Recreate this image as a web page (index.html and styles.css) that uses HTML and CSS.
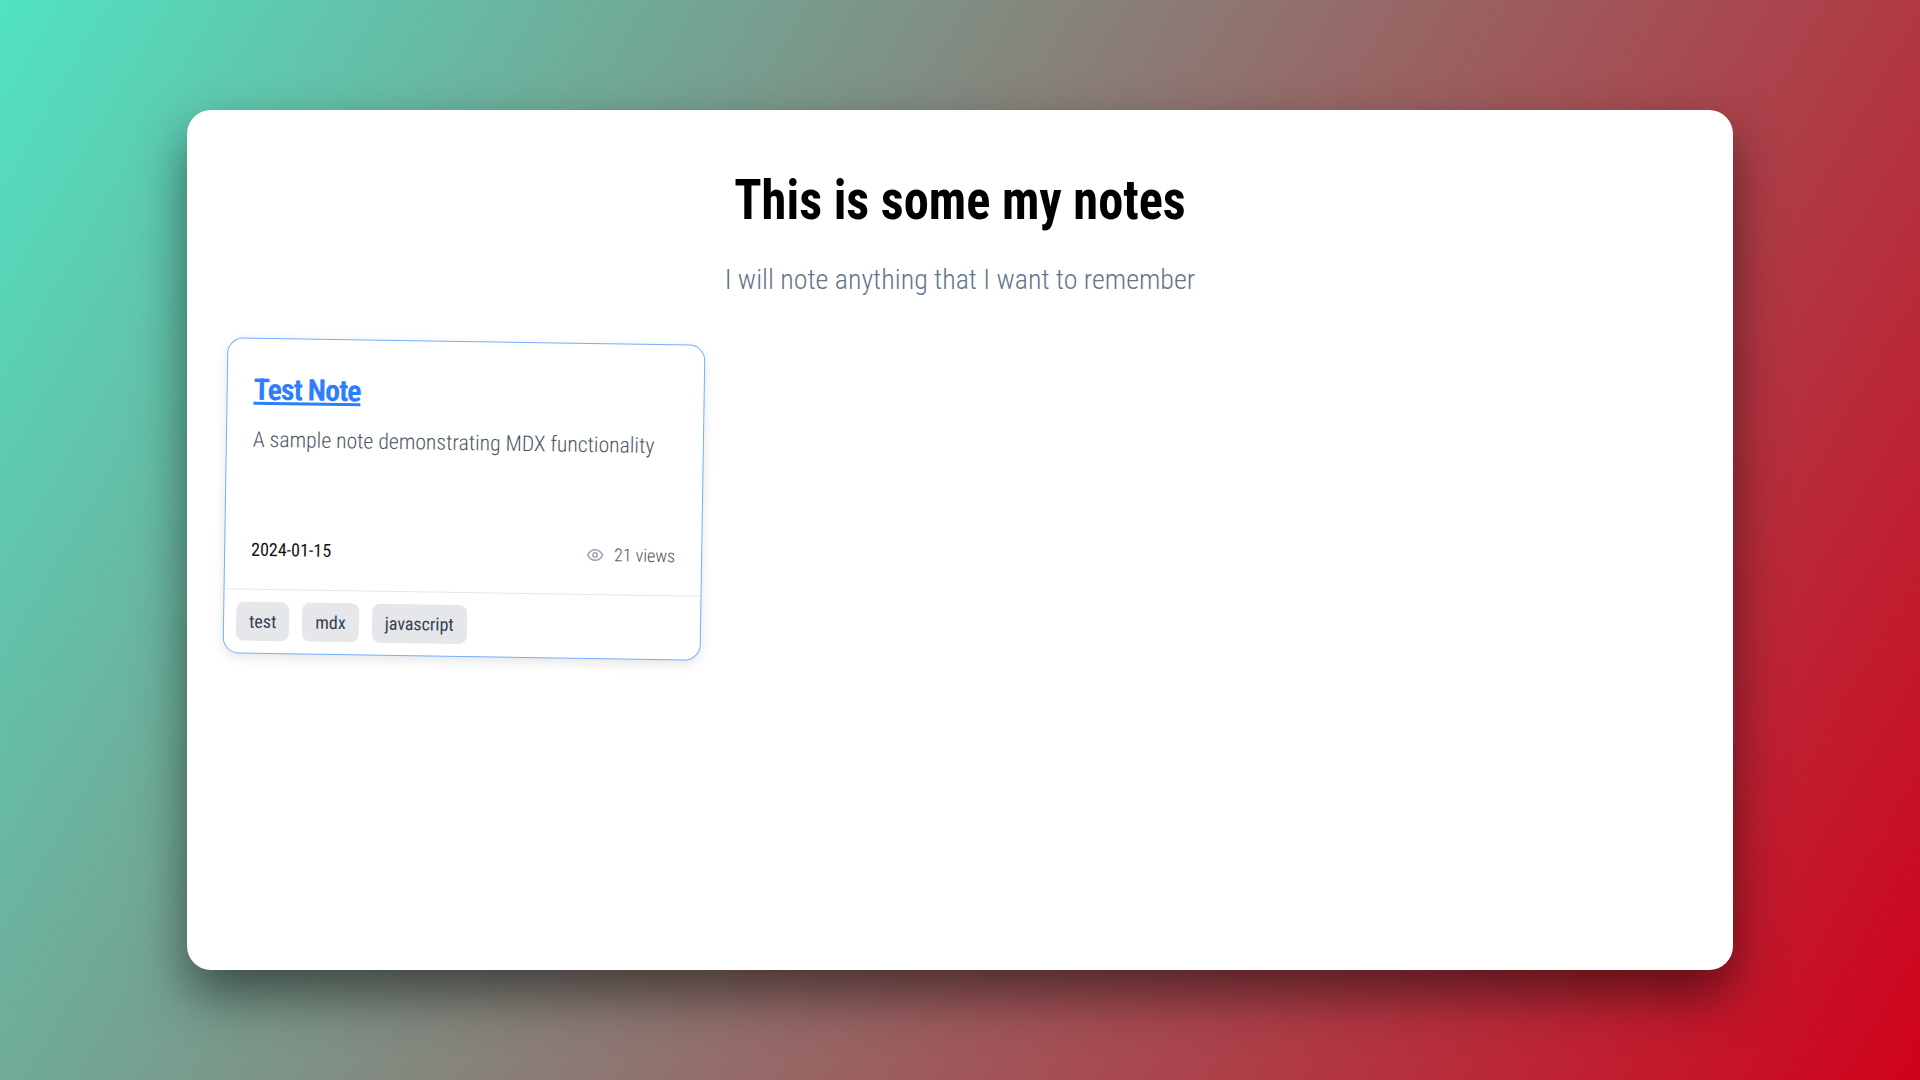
FILE: index.html
```html
<!DOCTYPE html>
<html lang="en">
<head>
  <meta charset="UTF-8">
  <meta name="viewport" content="width=device-width, initial-scale=1.0">
  <title>Notes</title>
  <link rel="stylesheet" href="styles.css">
</head>
<body>
  <main class="window">
    <header class="page-header">
      <h1>This is some my notes</h1>
      <p>I will note anything that I want to remember</p>
    </header>

    <div class="note-grid">
      <!-- Note card -->
      <article class="note-card">
        <div class="note-body">
          <h2><a href="#">Test Note</a></h2>
          <p class="note-desc">A sample note demonstrating MDX functionality</p>
          <div class="note-meta">
            <span class="note-date">2024-01-15</span>
            <span class="note-views">
              <svg class="eye-icon" width="18" height="18" viewBox="0 0 24 24" fill="none" stroke="currentColor" stroke-width="2" stroke-linecap="round" stroke-linejoin="round">
                <path d="M2 12s3.6-7 10-7 10 7 10 7-3.6 7-10 7-10-7-10-7z"/>
                <circle cx="12" cy="12" r="3"/>
              </svg>
              21 views
            </span>
          </div>
        </div>
        <div class="note-tags">
          <span class="tag">test</span>
          <span class="tag">mdx</span>
          <span class="tag">javascript</span>
        </div>
      </article>
    </div>
  </main>
</body>
</html>
```

FILE: styles.css
```css
/* General Reset */
* {
  margin: 0;
  padding: 0;
  box-sizing: border-box;
}

body {
  font-family: 'Roboto', 'Noto Sans', sans-serif;
  font-stretch: 75%;
  background: linear-gradient(120deg, #50e3c2 0%, #d0021b 100%);
  width: 1920px;
  height: 1080px;
  display: flex;
  justify-content: center;
  align-items: center;
  overflow: hidden;
}

/* White window */
.window {
  width: 1546px;
  height: 860px;
  background-color: #fff;
  border-radius: 24px;
  box-shadow: 0 25px 50px rgba(0, 0, 0, 0.5);
  padding: 58px 40px 40px;
}

/* Header */
.page-header {
  text-align: center;
  margin-bottom: 41px;
}

.page-header h1 {
  font-size: 56px;
  font-weight: 700;
  line-height: 64px;
  color: #000;
  margin-bottom: 28px;
  transform: scaleX(0.9); /* the heading is narrower than Roboto's condensed cut */
}

.page-header p {
  font-size: 28px;
  font-weight: 300;
  line-height: 40px;
  color: #64748b;
}

/* Notes */
.note-grid {
  display: grid;
  grid-template-columns: repeat(3, minmax(0, 1fr));
  gap: 16px;
  margin: 0 2px 0 -2px;
}

.note-card {
  height: 316px;
  background-color: #fff;
  border: 1px solid #74aeff;
  border-radius: 16px;
  box-shadow: 0 4px 12px rgba(0, 0, 0, 0.1);
  transform: rotate(0.9deg);
  display: flex;
  flex-direction: column;
}

.note-body {
  flex: 1;
  padding: 33px 26px 29px;
  display: flex;
  flex-direction: column;
  border-bottom: 1px solid #e5e7eb;
}

.note-body h2 {
  font-size: 30px;
  font-weight: 700;
  line-height: 36px;
  letter-spacing: -1px;
  margin-bottom: 18px;
}

.note-body h2 a {
  color: #2b7fff;
}

.note-desc {
  font-size: 21.7px;
  font-weight: 300;
  line-height: 28px;
  color: #4b5563;
}

.note-meta {
  margin-top: auto;
  display: flex;
  justify-content: space-between;
  align-items: center;
}

.note-date {
  font-size: 18px;
  color: #111;
}

.note-views {
  display: flex;
  align-items: center;
  gap: 10px;
  font-size: 18px;
  font-weight: 300;
  color: #4b5563;
}

.eye-icon {
  color: #9ca3af;
}

.note-tags {
  display: flex;
  gap: 13px;
  padding: 12px;
}

.tag {
  background-color: #e5e7eb;
  color: #374151;
  border-radius: 8px;
  font-size: 18px;
  line-height: 39px;
  padding: 0 13px;
}
```
